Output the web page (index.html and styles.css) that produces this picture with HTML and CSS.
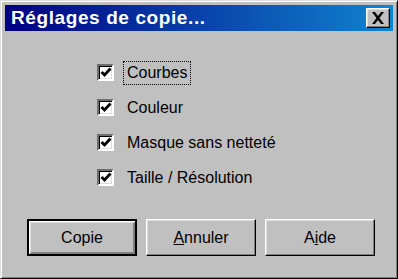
FILE: index.html
```html
<!DOCTYPE html>
<html lang="fr">
<head>
<meta charset="utf-8">
<title>Réglages de copie...</title>
<link rel="stylesheet" href="styles.css">
</head>
<body>
<div class="window">
  <div class="titlebar">
    <span class="title">Réglages de copie...</span>
    <span class="close">
      <svg width="14" height="12" viewBox="0 0 14 12"><path d="M1 0h3l3 4 3-4h3L8.5 6 13 12h-3L7 8l-3 4H1l4.5-6z" fill="#000"/></svg>
    </span>
  </div>
  <div class="content">
    <div class="options">
      <label class="opt"><span class="box"><svg width="12" height="11" viewBox="0 0 12 11"><path d="M1.5 5l3 3 6-6.5" fill="none" stroke="#000" stroke-width="2.8"/></svg></span><span class="lbl focus">Courbes</span></label>
      <label class="opt"><span class="box"><svg width="12" height="11" viewBox="0 0 12 11"><path d="M1.5 5l3 3 6-6.5" fill="none" stroke="#000" stroke-width="2.8"/></svg></span><span class="lbl">Couleur</span></label>
      <label class="opt"><span class="box"><svg width="12" height="11" viewBox="0 0 12 11"><path d="M1.5 5l3 3 6-6.5" fill="none" stroke="#000" stroke-width="2.8"/></svg></span><span class="lbl">Masque sans netteté</span></label>
      <label class="opt"><span class="box"><svg width="12" height="11" viewBox="0 0 12 11"><path d="M1.5 5l3 3 6-6.5" fill="none" stroke="#000" stroke-width="2.8"/></svg></span><span class="lbl">Taille / Résolution</span></label>
    </div>
    <div class="buttons">
      <button class="btn default">Copie</button>
      <button class="btn"><u>A</u>nnuler</button>
      <button class="btn">A<u>i</u>de</button>
    </div>
  </div>
</div>
</body>
</html>
```
FILE: styles.css
```css
html, body {
  margin: 0;
  padding: 0;
  background: #c0c0c0;
}
.window {
  width: 398px;
  height: 279px;
  box-sizing: border-box;
  background: #c0c0c0;
  border: 1px solid;
  border-color: #dfdfdf #000 #000 #dfdfdf;
  box-shadow: inset 1px 1px #fff, inset -1px -1px #808080;
  padding: 4px 4px 3px 4px;
  display: flex;
  flex-direction: column;
  font-family: "Liberation Sans", Arial, sans-serif;
}
.titlebar {
  height: 26px;
  background: linear-gradient(to right, #000080, #1084d0);
  display: flex;
  align-items: center;
  justify-content: space-between;
  padding: 0 3px 0 6px;
}
.title {
  color: #fff;
  font-weight: bold;
  font-size: 19px;
  letter-spacing: 0.6px;
}
.close {
  width: 24px;
  height: 20px;
  box-sizing: border-box;
  background: #c0c0c0;
  border: 1px solid;
  border-color: #fff #000 #000 #fff;
  box-shadow: inset -1px -1px #808080, inset 1px 1px #dfdfdf;
  display: flex;
  align-items: center;
  justify-content: center;
}
.content {
  flex: 1;
  display: flex;
  flex-direction: column;
}
.options {
  padding: 24px 0 0 92px;
  display: flex;
  flex-direction: column;
}
.opt {
  height: 35px;
  display: flex;
  align-items: center;
  font-size: 16px;
  color: #000;
}
.box {
  width: 17px;
  height: 17px;
  box-sizing: border-box;
  background: #fff;
  border: 2px solid;
  border-color: #6e6e6e #fff #fff #6e6e6e;
  box-shadow: inset 1px 1px #000, inset -1px -1px #dfdfdf;
  display: flex;
  align-items: center;
  justify-content: center;
  margin-right: 9px;
}
.lbl {
  padding: 2px 3px;
  border: 1px dotted transparent;
}
.lbl.focus {
  border-color: #000;
}
.buttons {
  margin-top: auto;
  margin-bottom: 19px;
  padding-left: 22px;
  display: flex;
  gap: 9px;
}
.btn {
  width: 110px;
  height: 37px;
  box-sizing: border-box;
  background: #c0c0c0;
  border: 1px solid;
  border-color: #fff #000 #000 #fff;
  box-shadow: inset -1px -1px #808080, inset 1px 1px #dfdfdf;
  font-family: "Liberation Sans", Arial, sans-serif;
  font-size: 16px;
  color: #000;
  padding: 0;
}
.btn.default {
  border: 2px solid #000;
  box-shadow: inset 1px 1px #fff, inset -1px -1px #808080, inset 2px 2px #dfdfdf, inset -2px -2px #808080;
}
```
